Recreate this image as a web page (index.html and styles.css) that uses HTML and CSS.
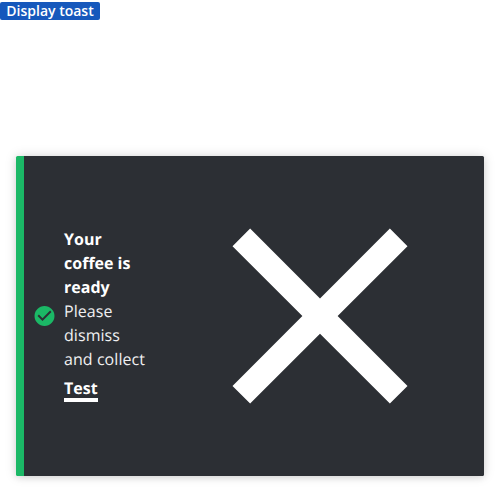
FILE: index.html
```html
<!DOCTYPE html>
<html lang="en">
<head>
<meta charset="utf-8">
<title>Toast</title>
<link rel="stylesheet" href="styles.css">
</head>
<body>
<button class="button">Display toast</button>
<div class="toast">
  <svg class="status" viewBox="0 0 24 24"><path fill="#1bb866" d="M12.500 2C6.980 2 2.500 6.480 2.500 12s4.480 10 10 10 10-4.480 10-10S18.020 2 12.500 2z"/><path fill="#2c2f34" d="M10.500 17l-5-5 1.410-1.410L10.500 14.170l7.590-7.590L19.500 8z"/></svg>
  <div class="content">
    <div class="title">Your coffee is ready</div>
    <div class="message">Please dismiss and collect</div>
    <a class="action">Test</a>
  </div>
  <svg class="close" viewBox="0 0 24 24"><path fill="#fff" d="M19 6.410L17.590 5 12 10.590 6.410 5 5 6.410 10.590 12 5 17.590 6.410 19 12 13.410 17.590 19 19 17.590 13.410 12z"/></svg>
</div>
</body>
</html>
```
FILE: styles.css
```css
* { box-sizing: border-box; }
body {
  margin: 0;
  height: 500px;
  overflow: hidden;
  background: #fff;
  font-family: "Open Sans", sans-serif;
  display: flex;
  flex-direction: column;
  align-items: flex-start;
}
.button {
  margin: 2px 0 0;
  width: 100px;
  height: 18px;
  padding: 0;
  border: 0;
  border-radius: 2px;
  background: #1658bc;
  color: #fff;
  font: 600 14px/18px "Open Sans", sans-serif;
}
.toast {
  margin: auto 16px 24px;
  width: 468px;
  height: 320px;
  display: flex;
  align-items: center;
  padding-left: 8px;
  background: linear-gradient(to right, #1bb866 8px, #2c2f34 8px);
  border-radius: 1.5px;
  color: #fff;
  font-size: 16px;
  line-height: 24px;
  box-shadow: 0 0 12px rgba(0, 0, 0, .15), 0 2px 6px rgba(0, 0, 0, .08);
  text-rendering: geometricPrecision;
}
.status { width: 24px; height: 24px; margin: 0 8px; flex: none; }
.content { width: 88px; height: 178px; flex: none; }
.title { font-weight: 700; }
.message { color: #f0f0f1; letter-spacing: .06px; }
.action {
  display: inline-block;
  margin-top: 6px;
  font-weight: 700;
  height: 25px;
  border-bottom: 4px solid #fff;
  line-height: 23px;
}
.close { width: 300px; height: 300px; margin-left: 18px; flex: none; }
```
